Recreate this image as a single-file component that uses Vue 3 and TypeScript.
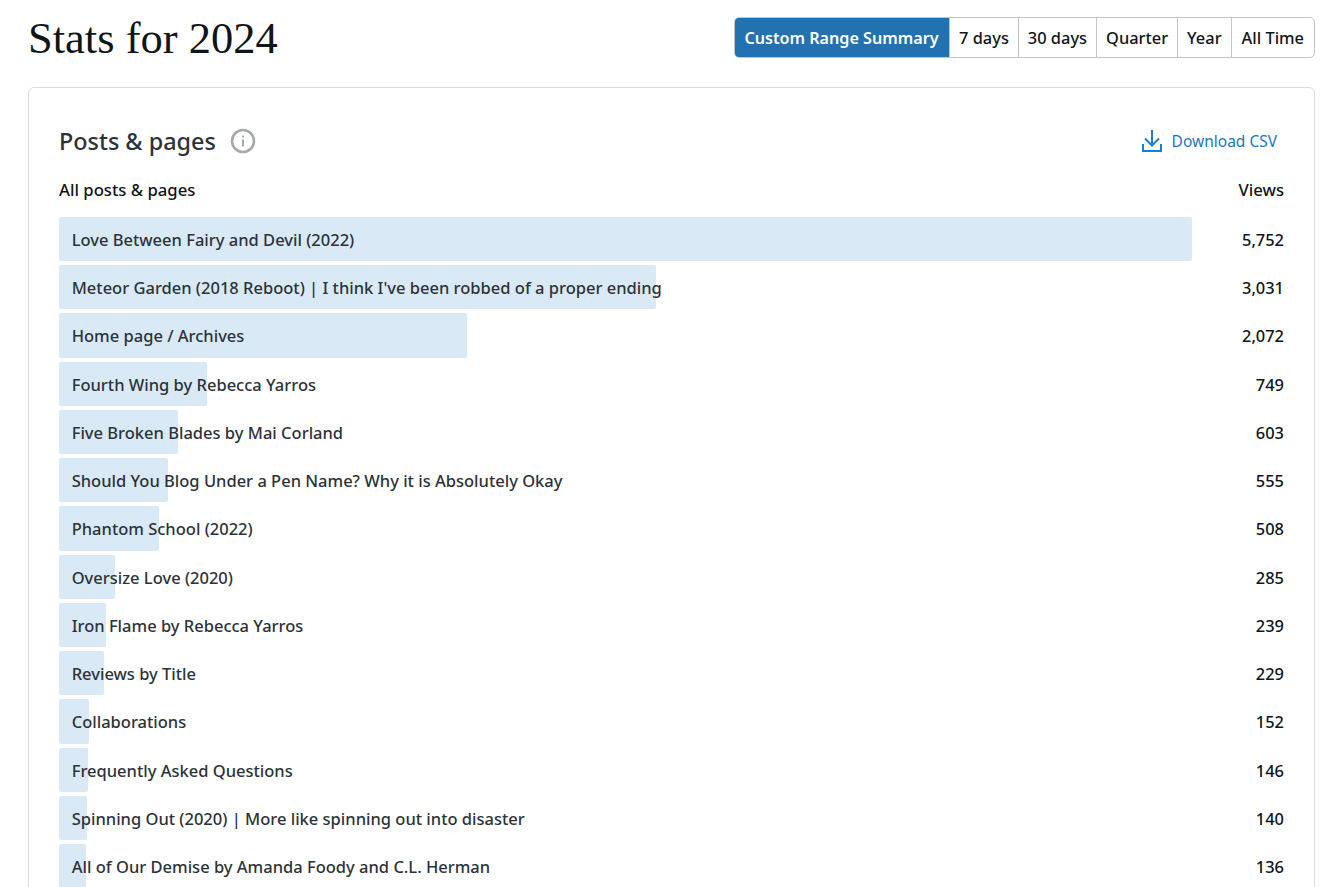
<script setup lang="ts">
const rows: [string, number][] = [
  ['Love Between Fairy and Devil (2022)', 5752],
  ["Meteor Garden (2018 Reboot) | I think I've been robbed of a proper ending", 3031],
  ['Home page / Archives', 2072],
  ['Fourth Wing by Rebecca Yarros', 749],
  ['Five Broken Blades by Mai Corland', 603],
  ['Should You Blog Under a Pen Name? Why it is Absolutely Okay', 555],
  ['Phantom School (2022)', 508],
  ['Oversize Love (2020)', 285],
  ['Iron Flame by Rebecca Yarros', 239],
  ['Reviews by Title', 229],
  ['Collaborations', 152],
  ['Frequently Asked Questions', 146],
  ['Spinning Out (2020) | More like spinning out into disaster', 140],
  ['All of Our Demise by Amanda Foody and C.L. Herman', 136],
]
const tabs = ['Custom Range Summary', '7 days', '30 days', 'Quarter', 'Year', 'All Time']
const pct = (v: number) => `${(v / 5752) * 100}%`
const fmt = (v: number) => v.toLocaleString('en-US')
</script>

<template>
  <div class="page">
    <header class="top">
      <h1>Stats for 2024</h1>
      <nav class="tabs">
        <span v-for="(t, i) in tabs" :key="t" class="tab" :class="{ on: i === 0 }">{{ t }}</span>
      </nav>
    </header>
    <section class="card">
      <div class="card-head">
        <div class="title">
          <h2>Posts &amp; pages</h2>
          <svg width="26" height="26" viewBox="0 0 26 26" fill="none" class="info">
            <circle cx="13" cy="13" r="11" stroke="#a7aaad" stroke-width="2.600" />
            <rect x="12" y="11.500" width="2" height="7" fill="#a7aaad" />
            <rect x="12" y="7.500" width="2" height="2.200" fill="#a7aaad" />
          </svg>
        </div>
        <a class="csv">
          <svg width="20" height="22" viewBox="0 0 20 22" fill="none" stroke="#1a7fd0" stroke-width="2">
            <path d="M10 0v15M3 8.500 10 15.500l7-7" />
            <path d="M1 14v7h18v-7" />
          </svg>
          Download CSV
        </a>
      </div>
      <div class="cols"><span>All posts &amp; pages</span><span>Views</span></div>
      <ul class="list">
        <li v-for="r in rows" :key="r[0]" class="row">
          <div class="track">
            <div class="bar" :style="{ width: pct(r[1]) }"></div>
            <span class="label">{{ r[0] }}</span>
          </div>
          <span class="val">{{ fmt(r[1]) }}</span>
        </li>
      </ul>
    </section>
  </div>
</template>

<style>
html, body { margin: 0; background: #fff; overflow: hidden; }
</style>

<style scoped>
.page {
  height: 887px;
  overflow: hidden;
  box-sizing: border-box;
  padding: 17px 28px 0;
  font-family: "Noto Sans", "Open Sans", sans-serif;
  color: #1d2327;
}
.top {
  display: flex;
  justify-content: space-between;
  align-items: flex-start;
  height: 70px;
}
h1 {
  margin: 0;
  font-family: "Liberation Serif", serif;
  font-weight: 400;
  font-size: 44.500px;
  line-height: 43px;
  color: #101517;
}
.tabs {
  display: flex;
  height: 41px;
  box-sizing: border-box;
  border: 1px solid #c3c4c7;
  border-radius: 5px;
  overflow: hidden;
}
.tab {
  display: flex;
  align-items: center;
  padding: 0 9px;
  font-size: 16.400px;
  font-weight: 500;
  color: #101517;
  border-left: 1px solid #c3c4c7;
}
.tab:first-child { border-left: 0; }
.tab:last-child { padding: 0 10px; }
.tab.on {
  background: #2271b1;
  color: #fff;
  margin: -1px 0 -1px -1px;
  padding: 0 10.500px;
  font-weight: 600;
  font-size: 16.150px;
}
.card {
  border: 1px solid #dcdcde;
  border-radius: 6px;
  padding: 30px 30px 0;
  background: #fff;
}
.card-head {
  display: flex;
  justify-content: space-between;
  align-items: center;
  height: 45px;
  padding-right: 7px;
}
.title { display: flex; align-items: center; gap: 14px; }
h2 {
  margin: 0;
  font-size: 23.400px;
  font-weight: 500;
  color: #2c3338;
}
.csv {
  display: flex;
  align-items: center;
  gap: 10px;
  font-size: 15.500px;
  color: #1b76c0;
}
.cols {
  display: flex;
  justify-content: space-between;
  margin-top: 16px;
  font-size: 16.700px;
  font-weight: 500;
  color: #101517;
  line-height: 22px;
}
.list { list-style: none; margin: 15.800px 0 0; padding: 0; }
.row {
  display: flex;
  height: 44.250px;
  margin-bottom: 4px;
  align-items: center;
}
.track {
  position: relative;
  flex: 0 0 1133px;
  height: 100%;
  display: flex;
  align-items: center;
}
.bar {
  position: absolute;
  inset: 0 auto 0 0;
  background: #dae9f6;
  border-radius: 2px;
}
.label {
  position: relative;
  padding: 1px 0 0 12.700px;
  font-size: 16.500px;
  font-weight: 500;
  color: #2c3338;
  white-space: nowrap;
}
.val {
  flex: 1;
  text-align: right;
  padding-top: 1px;
  font-size: 16.400px;
  font-weight: 500;
  color: #101517;
}
</style>
